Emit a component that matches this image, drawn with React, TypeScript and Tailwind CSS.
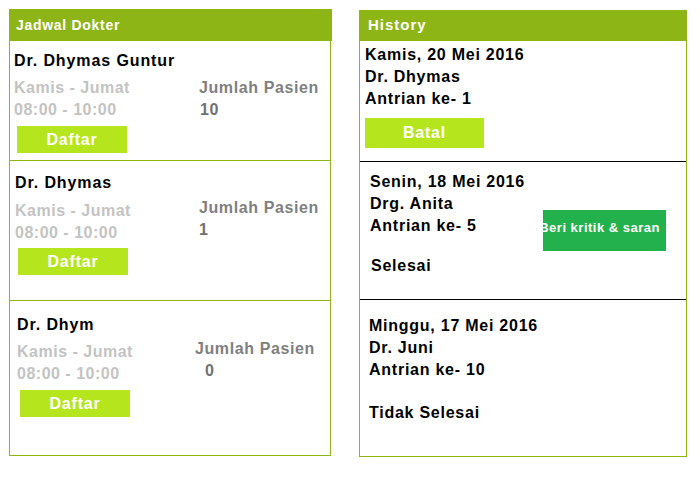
const FONT = "font-['Liberation_Sans',Arial,sans-serif]";

const GREEN = "bg-[#8db516]";

type Doctor = {
    name: string;
    count: string;
    rowClass: string;
    infoClass: string;
    leftColClass: string;
    rightColClass: string;
    countClass: string;
    btnClass: string;
};

const doctors: Doctor[] = [
    {
        name: "Dr. Dhymas Guntur",
        count: "10",
        rowClass: "h-[120px] pt-[9px] pl-[4px] border-b border-[#8db516]",
        infoClass: "mt-[5px]",
        leftColClass: "w-[185px]",
        rightColClass: "",
        countClass: "pl-[1px]",
        btnClass: "mt-[5px] ml-[3px]",
    },
    {
        name: "Dr. Dhymas",
        count: "1",
        rowClass: "h-[140px] pt-[11px] pl-[5px] border-b border-[#8db516]",
        infoClass: "mt-[6px]",
        leftColClass: "w-[184px]",
        rightColClass: "-mt-[3px]",
        countClass: "",
        btnClass: "mt-[4px] ml-[3px]",
    },
    {
        name: "Dr. Dhym",
        count: "0",
        rowClass: "h-[154px] pt-[13px] pl-[7px]",
        infoClass: "mt-[5px]",
        leftColClass: "w-[178px]",
        rightColClass: "-mt-[3px]",
        countClass: "pl-[10px]",
        btnClass: "mt-[5px] ml-[3px]",
    },
];

function DoctorRow({ d }: { d: Doctor }) {
    return (
        <div className={`box-border flex flex-col ${d.rowClass}`}>
            <div className="text-[16px] leading-[22px] font-bold tracking-[0.9px] text-black">
                {d.name}
            </div>
            <div className={`flex items-start ${d.infoClass}`}>
                <div
                    className={`flex flex-col text-[16px] leading-[22px] font-bold tracking-[0.5px] text-[#c3c3c3] ${d.leftColClass}`}
                >
                    <span>Kamis - Jumat</span>
                    <span>08:00 - 10:00</span>
                </div>
                <div
                    className={`flex flex-col text-[16px] leading-[22px] font-bold tracking-[0.6px] text-[#7f7f7f] ${d.rightColClass}`}
                >
                    <span>Jumlah Pasien</span>
                    <span className={`text-[#707070] ${d.countClass}`}>{d.count}</span>
                </div>
            </div>
            <button
                type="button"
                className={`flex h-[27px] w-[110px] items-center justify-center bg-[#b5e61d] text-[16px] font-bold tracking-[0.8px] text-white ${d.btnClass}`}
            >
                Daftar
            </button>
        </div>
    );
}

const LINE = "text-[16px] leading-[22px] font-bold tracking-[0.75px] text-black";

function HistoryPanel() {
    return (
        <div className="mt-[1px] ml-[28px] flex w-[328px] flex-col">
            <div className={`flex h-[31px] items-center pl-[9px] ${GREEN}`}>
                <span className="text-[15px] font-bold tracking-[1px] text-white">History</span>
            </div>
            <div className="box-border flex flex-col border-x border-b border-[#8db516]">
                <div className="box-border flex h-[121px] flex-col border-b border-black pt-[3px] pl-[5px]">
                    <span className={LINE}>Kamis, 20 Mei 2016</span>
                    <span className={LINE}>Dr. Dhymas</span>
                    <span className={LINE}>Antrian ke- 1</span>
                    <button
                        type="button"
                        className="mt-[8px] flex h-[30px] w-[119px] items-center justify-center bg-[#b5e61d] text-[16px] font-bold tracking-[0.8px] text-white"
                    >
                        Batal
                    </button>
                </div>
                <div className="box-border flex h-[138px] items-start border-b border-black pt-[9px] pl-[10px]">
                    <div className="flex w-[173px] flex-col">
                        <span className={LINE}>Senin, 18 Mei 2016</span>
                        <span className={LINE}>Drg. Anita</span>
                        <span className={LINE}>Antrian ke- 5</span>
                        <span className={`mt-[18px] ml-[1px] ${LINE}`}>Selesai</span>
                    </div>
                    <button
                        type="button"
                        className="mt-[39px] flex h-[41px] w-[123px] items-center justify-end overflow-hidden bg-[#22b14c] pr-[6px] pb-[5px]"
                    >
                        <span className="whitespace-nowrap text-[13px] font-bold tracking-[0.5px] text-white">
                            Beri kritik &amp; saran
                        </span>
                    </button>
                </div>
                <div className="box-border flex h-[156px] flex-col pt-[15px] pl-[9px]">
                    <span className={LINE}>Minggu, 17 Mei 2016</span>
                    <span className={LINE}>Dr. Juni</span>
                    <span className={LINE}>Antrian ke- 10</span>
                    <span className={`mt-[21px] ${LINE}`}>Tidak Selesai</span>
                </div>
            </div>
        </div>
    );
}

export default function App() {
    return (
        <div className={`flex h-[481px] w-[700px] items-start bg-white pt-[9px] pl-[9px] ${FONT}`}>
            <div className="flex w-[322px] flex-col">
                <div className={`flex h-[32px] w-[323px] items-center pl-[7px] ${GREEN}`}>
                    <span className="text-[14px] font-bold tracking-[0.7px] text-white">Jadwal Dokter</span>
                </div>
                <div className="box-border flex flex-col border-x border-b border-[#8db516]">
                    {doctors.map((d) => (
                        <DoctorRow key={d.name} d={d} />
                    ))}
                </div>
            </div>
            <HistoryPanel />
        </div>
    );
}
